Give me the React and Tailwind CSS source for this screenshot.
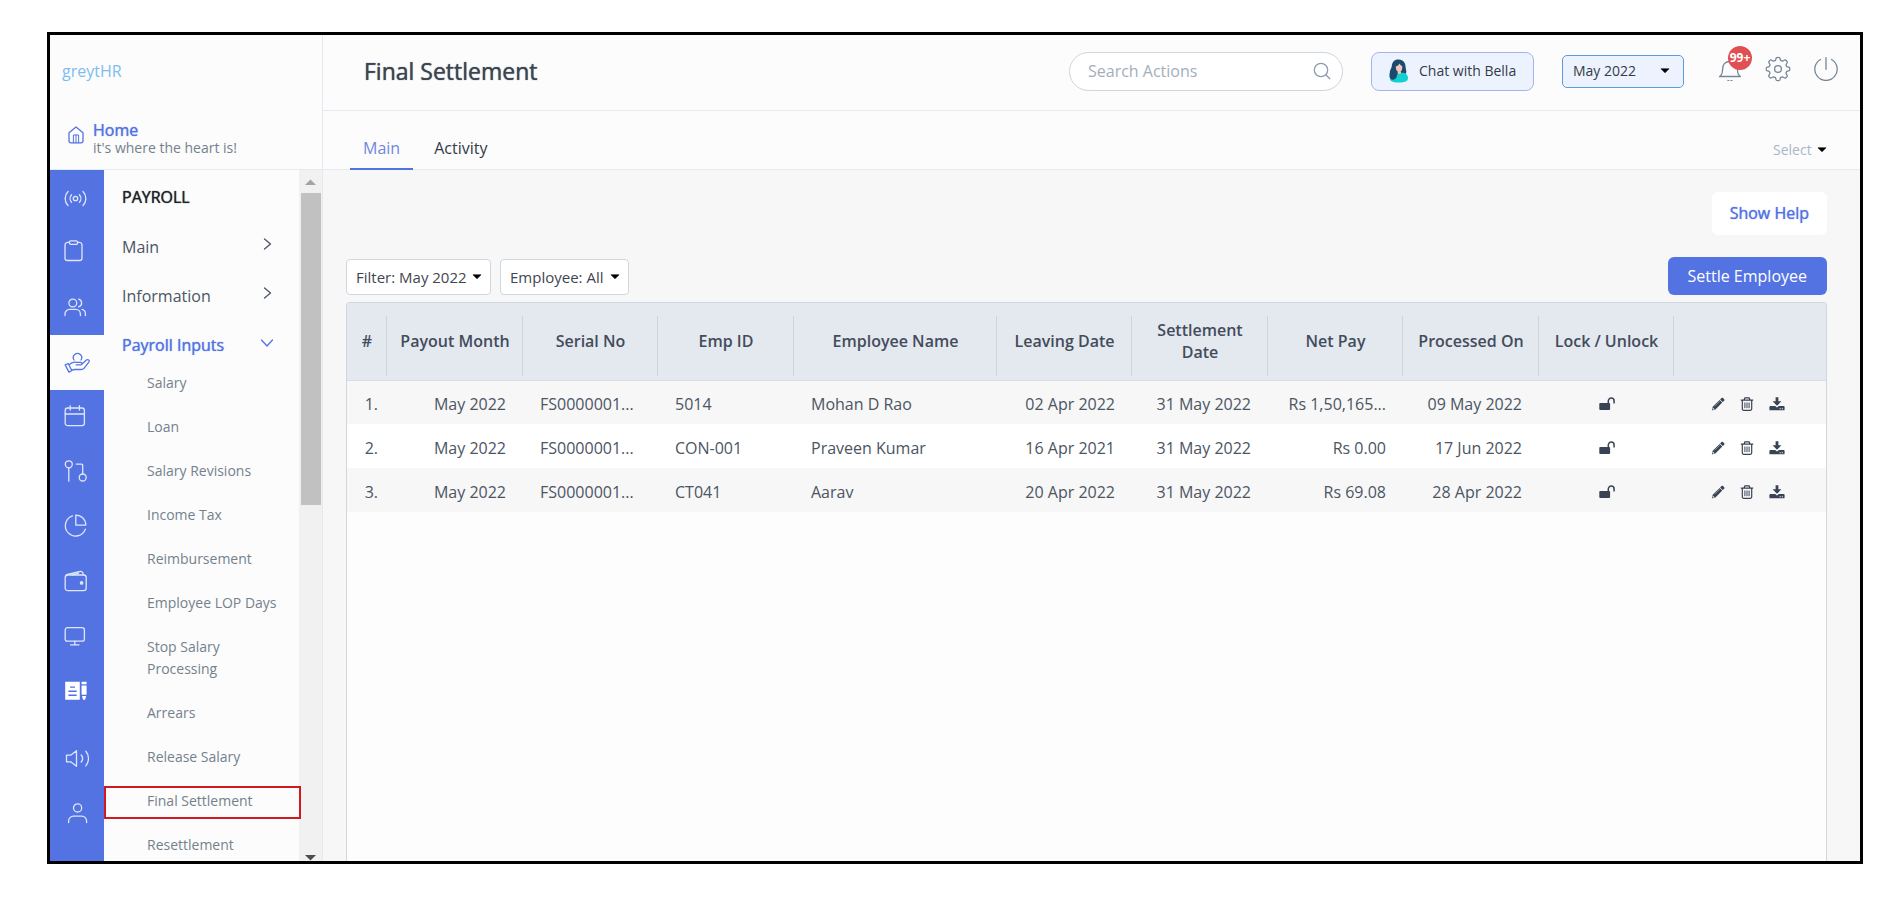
import React from "react";

const line = {
  fill: "none",
  stroke: "currentColor",
  strokeWidth: 1.3,
  strokeLinecap: "round",
  strokeLinejoin: "round",
};

const heavy = "[text-shadow:0_0_1px_currentColor]";

function RailSvg({ children }) {
  return (
    <svg width="26" height="24" viewBox="0 0 26 24" className="overflow-visible" aria-hidden="true" {...line}>
      {children}
    </svg>
  );
}

const railTop = [
  {
    label: "Engage",
    icon: (
      <>
        <circle cx="11.5" cy="12.500" r="2.2" />
        <path d="M7.6 8.800a5.400 5.400 0 0 0 0 7.400M15.400 8.800a5.400 5.400 0 0 1 0 7.400M4 5.500a10 10 0 0 0 0 14M19 5.500a10 10 0 0 1 0 14" />
      </>
    ),
  },
  {
    label: "Tasks",
    icon: (
      <>
        <path d="M5.500 1.400H3.600A2.600 2.600 0 0 0 1 4V16.900A2.600 2.600 0 0 0 3.600 19.500H15.400A2.600 2.600 0 0 0 18 16.900V4A2.600 2.600 0 0 0 15.400 1.400H13.500" />
        <rect x="5.500" y="-0.100" width="8" height="3.400" rx="1.200" />
      </>
    ),
  },
  {
    label: "Employee",
    icon: (
      <>
        <circle cx="8.800" cy="7" r="3.900" />
        <path d="M1 19.500v-1.500a4.600 4.600 0 0 1 4.600-4.600h6.200a4.600 4.600 0 0 1 4.600 4.600v1.500M14.600 3.200a3.900 3.900 0 0 1 0 7.600M18 13.400a4.400 4.400 0 0 1 3.400 4.300v1.800" />
      </>
    ),
  },
  {
    label: "Payroll",
    active: true,
    icon: (
      <>
        <path d="M10 9a4.200 4.200 0 1 1 7 0" />
        <path d="M1.200 13.900l3-1.400 3.600 7-2.800 1.600zM5 13.900c2.500-3 5.400-3.200 8-2.600h3.600c1.800 0 1.800 2.600 0 2.600h-4.400M18 12.900l4.400-3.800c1.600-1.200 3.600.2 2.600 1.800l-5 6.400c-.8 1-1.600 1.200-2.800 1.200H11c-1.200 0-2.200.2-3.400.8" />
      </>
    ),
  },
  {
    label: "Leave",
    icon: (
      <>
        <rect x="1.200" y="2" width="19.200" height="17.600" rx="2.400" />
        <path d="M1.200 8h19.200M6.200 -0.400v4.400M15.400 -0.400v4.400" />
      </>
    ),
  },
  {
    label: "Workflow",
    icon: (
      <>
        <circle cx="4.800" cy="3.300" r="3.500" />
        <path d="M4.800 6.800v13.400M12.300 3.100h5.200a1.200 1.200 0 0 1 1.200 1.200v8.800" />
        <circle cx="18.700" cy="16.500" r="3.500" />
      </>
    ),
  },
  {
    label: "Reports",
    icon: (
      <>
        <path d="M8.500 -0.100A10.300 10.300 0 1 0 21.400 13.100" />
        <path d="M11.800 -0.900v10h10a10 10 0 0 0-10-10z" />
      </>
    ),
  },
  {
    label: "Expenses",
    icon: (
      <>
        <rect x="1.200" y="4" width="21" height="15.600" rx="2.600" />
        <path d="M1.600 5c.2-1 .8-1.500 1.800-1.700L16 0.500c1.500-.4 2.600.4 2.900 1.700l.3 1.600M8 3.900l6.500-1.600" />
        <circle cx="17.600" cy="11.900" r="1.200" fill="currentColor" />
      </>
    ),
  },
  {
    label: "Helpdesk",
    icon: (
      <>
        <rect x="1.200" y="1.700" width="19.200" height="13.400" rx="2.200" />
        <path d="M10.800 15.100v3.600M6.600 18.800h8.400" />
      </>
    ),
  },
  {
    label: "Documents",
    icon: (
      <g stroke="none" fill="#fff">
        <path
          fillRule="evenodd"
          d="M1.200 0.800h14.600v18H1.200zM6 5.600v1.200h5V5.600zM4.400 9.600v1.300h8.300V9.600zM4.400 13.600v1.300h8.300V13.600z"
        />
        <path d="M17.600 0.800h5v2.400h-5zM17.600 4.400h5v9.400h-5zM18 15h4.200l-1.100 3.800h-2z" />
      </g>
    ),
  },
];

const railBottom = [
  {
    label: "Announcements",
    icon: (
      <path d="M2.500 7.200h4.200L12.500 2.700v15.600l-5.800-4.500H2.500zM17.200 7a5.400 5.400 0 0 1 0 7M21.800 3.300c3.600 4 3.600 10.400 0 14.400" />
    ),
  },
  {
    label: "Profile",
    icon: (
      <>
        <circle cx="13.600" cy="4.900" r="4.100" />
        <path d="M4.600 19.500v-1.500a4.800 4.800 0 0 1 4.800-4.800h8.400a4.800 4.800 0 0 1 4.800 4.800v1.500" />
      </>
    ),
  },
];

const payrollInputs = [
  "Salary",
  "Loan",
  "Salary Revisions",
  "Income Tax",
  "Reimbursement",
  "Employee LOP Days",
  "Stop Salary Processing",
  "Arrears",
  "Release Salary",
  "Final Settlement",
  "Resettlement",
];

const columns = [
  { title: "#", width: "w-[40px]" },
  { title: "Payout Month", width: "w-[136px]" },
  { title: "Serial No", width: "w-[135px]" },
  { title: "Emp ID", width: "w-[136px]" },
  { title: "Employee Name", width: "w-[203px]" },
  { title: "Leaving Date", width: "w-[135px]" },
  { title: "Settlement Date", width: "w-[136px]" },
  { title: "Net Pay", width: "w-[135px]" },
  { title: "Processed On", width: "w-[136px]" },
  { title: "Lock / Unlock", width: "w-[135px]" },
  { title: "", width: "w-[152px]" },
];

const rows = [
  ["1.", "May 2022", "FS0000001...", "5014", "Mohan D Rao", "02 Apr 2022", "31 May 2022", "Rs 1,50,165...", "09 May 2022"],
  ["2.", "May 2022", "FS0000001...", "CON-001", "Praveen Kumar", "16 Apr 2021", "31 May 2022", "Rs 0.00", "17 Jun 2022"],
  ["3.", "May 2022", "FS0000001...", "CT041", "Aarav", "20 Apr 2022", "31 May 2022", "Rs 69.08", "28 Apr 2022"],
];

const cellAlign = [
  "pr-[9px] text-right",
  "px-[17px] text-right",
  "px-[17px] text-left",
  "px-[17px] text-left",
  "px-[17px] text-left",
  "px-[17px] text-right",
  "px-[17px] text-right",
  "px-[17px] text-right",
  "px-[17px] text-right",
];

function Caret({ className }) {
  return (
    <svg width="10" height="6" viewBox="0 0 10 6" className={className} aria-hidden="true">
      <path d="M1 0.800h8L5 4.800z" fill="#000" stroke="#000" strokeWidth="0.600" strokeLinejoin="round" />
    </svg>
  );
}

function UnlockIcon() {
  return (
    <svg width="16" height="14" viewBox="0 0 16 14" aria-hidden="true">
      <rect x="0.300" y="6" width="10.800" height="7" rx="0.900" fill="currentColor" />
      <path d="M9.300 6V4a2.900 2.900 0 0 1 5.800 0v2.600" fill="none" stroke="currentColor" strokeWidth="1.500" />
    </svg>
  );
}

function PencilIcon() {
  return (
    <svg width="14" height="14" viewBox="0 0 14 14" aria-hidden="true">
      <path
        d="M10.300 1.200c.6-.6 1.300-.6 1.900 0l.8.800c.6.6.6 1.300 0 1.900l-1.200 1.200-2.700-2.700zM8.600 2.900l2.700 2.700-6.900 6.900-3.600.9.900-3.600z"
        fill="currentColor"
      />
      <path d="M1.900 10.600l1.700 1.700-1.600.4-.5-.5z" fill="#e9ebef" />
      <path d="M3.600 9.300l5.200-5.200" stroke="#aab1bd" strokeWidth="0.700" />
    </svg>
  );
}

function TrashIcon() {
  return (
    <svg width="14" height="14" viewBox="0 0 14 14" aria-hidden="true" fill="none" stroke="currentColor" strokeWidth="1.200">
      <path d="M0.800 3.200h12.400M4 3l.9-2.200h4.200L10 3M2.300 3.400v8.400a1.500 1.500 0 0 0 1.500 1.500h6.400a1.500 1.500 0 0 0 1.500-1.500V3.400" />
      <path d="M4.900 5.500v5.600M7 5.500v5.600M9.100 5.500v5.600" strokeWidth="1" />
    </svg>
  );
}

function DownloadIcon() {
  return (
    <svg width="16" height="14" viewBox="0 0 16 14" aria-hidden="true">
      <path d="M6.600 0.300h2.800v3.900h3L8 8.700 3.600 4.200h3z" fill="currentColor" />
      <path
        fillRule="evenodd"
        d="M1.300 9h4.900L8 10.600 9.800 9h4.900c.5 0 .9.400.9.900v2.500c0 .5-.4.900-.9.900H1.300c-.5 0-.9-.4-.9-.9V9.900c0-.5.400-.9.900-.9zM10.600 11.300v.9h1.100v-.9zM12.800 11.300v.9h1.100v-.9z"
        fill="currentColor"
      />
    </svg>
  );
}

function Dropdown({ label, value, selectClass, caretClass }) {
  return (
    <div className="relative flex items-center">
      <select
        aria-label={label}
        defaultValue={value}
        className={"cursor-pointer appearance-none outline-none " + selectClass}
      >
        <option>{value}</option>
      </select>
      <Caret className={"pointer-events-none absolute " + caretClass} />
    </div>
  );
}

function RailItem({ item }) {
  return (
    <a
      href="#"
      aria-label={item.label}
      className={
        "flex h-[55px] shrink-0 items-center pl-[14px] " +
        (item.active ? "bg-[#fcfcfc] text-[#5473e3]" : "text-[#dfe6fb]")
      }
    >
      <RailSvg>{item.icon}</RailSvg>
    </a>
  );
}

function GroupButton({ title, open }) {
  return (
    <button
      type="button"
      aria-expanded={!!open}
      className={
        "flex h-[49px] w-full items-center justify-between pr-[25px] pl-[18px] text-left " +
        (open ? "text-[#5473e3] " + heavy : "text-[#4b5563]")
      }
    >
      {title}
      <svg width="14" height="14" viewBox="0 0 14 14" className="mb-1" aria-hidden="true" {...line}>
        {open ? <path d="M1.500 4L7 10l5.500-6" /> : <path d="M4.500 1l6 5-6 5" />}
      </svg>
    </button>
  );
}

function Sidebar() {
  return (
    <aside className="flex w-[273px] shrink-0 flex-col border-r border-[#e6e9f0] bg-[#fcfcfc]">
      <a href="#" className="flex h-[73px] shrink-0 items-center pb-[2px] pl-3 text-base text-[#7bbcf2]">
        greytHR
      </a>
      <a href="#" className="flex h-[62px] shrink-0 items-center gap-[9px] border-b border-[#e6e9f0] pl-[18px]">
        <svg width="16" height="18" viewBox="0 0 16 18" className="mb-2 text-[#5473e3]" aria-hidden="true" {...line}>
          <path d="M1 6.800L8 1l7 5.800v8.400a1.600 1.600 0 0 1-1.600 1.600H2.600A1.600 1.600 0 0 1 1 15.200z" />
          <path d="M5.400 16.800V9h5.200v7.800M8 9v7.800" strokeWidth="1" />
        </svg>
        <span className="flex flex-col">
          <span className={"text-base leading-[18px] text-[#5473e3] " + heavy}>Home</span>
          <span className="text-sm leading-[18px] text-[#74818c]">it's where the heart is!</span>
        </span>
      </a>
      <div className="flex min-h-0 flex-1">
        <nav aria-label="Modules" className="flex w-[54px] shrink-0 flex-col bg-[#5473e3]">
          {railTop.map((item) => (
            <RailItem key={item.label} item={item} />
          ))}
          <div className="mt-3 flex flex-col">
            {railBottom.map((item) => (
              <RailItem key={item.label} item={item} />
            ))}
          </div>
        </nav>
        <nav aria-label="Payroll" className="min-w-0 flex-1 pt-[2px]">
          <h2 className={"flex h-[50px] items-center pl-[18px] text-base text-[#1f2328] " + heavy}>PAYROLL</h2>
          <GroupButton title="Main" />
          <GroupButton title="Information" />
          <GroupButton title="Payroll Inputs" open />
          <ul className="-mt-2 text-sm leading-[22px] text-[#74818c]">
            {payrollInputs.map((name) => (
              <li key={name} className="relative">
                <a href="#" className="block py-[11px] pr-4 pl-[43px]">
                  {name}
                </a>
                {name === "Final Settlement" && (
                  <span className="pointer-events-none absolute top-[7px] -right-[2px] bottom-1 left-0 z-10 border-2 border-[#cf1a20]" />
                )}
              </li>
            ))}
          </ul>
        </nav>
        <div className="flex w-[23px] shrink-0 flex-col items-center justify-between bg-[#f1f1f1]">
          <div className="flex w-full flex-col items-center">
            <svg width="11" height="23" viewBox="0 0 11 23" aria-hidden="true">
              <path d="M0 15h11L5.500 9.500z" fill="#a3a3a3" />
            </svg>
            <div className="h-[312px] w-5 bg-[#c1c1c1]" />
          </div>
          <svg width="11" height="6" viewBox="0 0 11 6" aria-hidden="true">
            <path d="M0 0h11L5.500 5.500z" fill="#4d4d4d" />
          </svg>
        </div>
      </div>
    </aside>
  );
}

function Header() {
  return (
    <header className="flex h-[76px] shrink-0 items-center border-b border-[#e6e9f0] bg-[#fcfcfc] pr-[22px] pb-[3px] pl-[41px]">
      <h1 className={"flex-1 text-[23px] text-[#3d4552] " + heavy}>Final Settlement</h1>
      <div className="relative mr-7">
        <input
          type="text"
          aria-label="Search Actions"
          placeholder="Search Actions"
          className="h-[39px] w-[274px] rounded-full border border-[#cfd5dc] bg-white pr-12 pl-[18px] text-base text-[#3d4552] outline-none placeholder:text-[#a3aebd]"
        />
        <svg
          width="18"
          height="18"
          viewBox="0 0 18 18"
          className="pointer-events-none absolute top-[10px] right-3 text-[#8d9aac]"
          aria-hidden="true"
          {...line}
        >
          <circle cx="8" cy="8" r="6.700" />
          <path d="M12.800 12.800l4 4" />
        </svg>
      </div>
      <button
        type="button"
        className="mr-7 flex h-[39px] w-[163px] items-center gap-[10px] rounded-lg border border-[#a4b4ee] bg-[#edf3fe] pl-[17px] text-sm text-[#333b47]"
      >
        <svg width="20" height="24" viewBox="0 0 20 24" aria-hidden="true">
          <path
            d="M9.500 0.500C5.500 0.300 3.200 3 2.800 7 2.600 9.500 0.600 11 0.800 14c0 2.500-.6 4 .8 6 1.500 2 5 2 7 1l8-6c1.300-1.500.6-3.500.2-5.500C16.400 7 16.500 5.500 15.500 3.800 14.500 1.800 12.500 0.600 9.500 0.500z"
            fill="#1c4a6e"
          />
          <path d="M1 20.500C1.500 17.500 5 17 7.500 15.500l5.500-1.800c3.500-.2 6 2 6 5.500 0 3-4 4.300-8.500 4.300S1.500 23 1 20.500z" fill="#12cfd0" />
          <path d="M0.800 14c0 2.500-.6 4 .8 6 2 1.500 5 .5 6-2l.8-4-1.600-4z" fill="#1c4a6e" />
          <path d="M6.800 7.500c1.500-.3 3-1.500 3.600-3 1 1.500 2 2.300 2.800 2.700.3 3-.6 5.600-3 5.800-2.200 0-3.400-2.500-3.400-5.500z" fill="#f3c6bb" />
          <path d="M8.600 12.400l.1 2.200c1.200.8 2.600.6 3.400-.3l-.2-2z" fill="#f3c6bb" />
        </svg>
        Chat with Bella
      </button>
      <Dropdown
        label="Payroll month"
        value="May 2022"
        selectClass="h-[33px] w-[122px] rounded-[5px] border border-[#5e9bdc] bg-[#edf3fe] pl-[10px] text-sm text-[#333b47]"
        caretClass="right-[14px]"
      />
      <div className="ml-[34px] flex items-center gap-[23px] pb-1 text-[#76869a]">
        <a href="#" aria-label="Notifications" className="relative block">
          <svg width="24" height="24" viewBox="0 0 24 24" aria-hidden="true" {...line}>
            <path d="M1.500 19.500c2.500-1.500 3-3.500 3-6.500C4.500 7.500 7 4.500 12 4.500s7.500 3 7.500 8.500c0 3 .5 5 3 6.500zM10 23.500c1 1 3 1 4 0" />
          </svg>
          <span className="absolute -top-[11px] left-[10px] flex h-6 w-6 items-center justify-center rounded-full bg-[#e04f51] text-xs font-bold text-white">
            99+
          </span>
        </a>
        <a href="#" aria-label="Settings" className="block">
          <svg width="26" height="26" viewBox="0 0 26 26" aria-hidden="true" {...line}>
            <circle cx="13" cy="13" r="3.400" />
            <path d="M11.200 2c.4-.8 3.200-.8 3.600 0l.7 2.400 2 .8 2.200-1.200c.9-.4 2.900 1.600 2.500 2.500L21 8.700l.8 2 2.400.7c.8.4.8 2.800 0 3.200l-2.400.7-.8 2 1.200 2.200c.4.9-1.600 2.900-2.500 2.500L17.500 20.800l-2 .8-.7 2.400c-.4.8-3.200.8-3.600 0l-.7-2.400-2-.8-2.200 1.200c-.9.4-2.900-1.600-2.500-2.500L5 17.300l-.8-2-2.400-.7c-.8-.4-.8-2.800 0-3.200l2.400-.7.8-2-1.200-2.200c-.4-.9 1.600-2.900 2.500-2.500l2.200 1.200 2-.8z" />
          </svg>
        </a>
        <a href="#" aria-label="Log out" className="block">
          <svg width="24" height="24" viewBox="0 0 24 24" aria-hidden="true" {...line}>
            <path d="M12 0.700v11.600M6.500 2.500a11.200 11.200 0 1 0 11 0" />
          </svg>
        </a>
      </div>
    </header>
  );
}

function SettlementTable() {
  return (
    <div className="min-h-0 flex-1 overflow-hidden rounded-t border border-b-0 border-[#cfd7e1] bg-[#fdfdfd]">
      <table className="w-full table-fixed border-collapse text-base">
        <thead className="bg-[#e4e8ef] text-[#434c5b]">
          <tr className="h-[77px] border-b border-[#d7dde5]">
            {columns.map((c, i) => (
              <th
                key={i}
                scope="col"
                aria-label={c.title || "Actions"}
                className={
                  "relative px-2 text-center leading-[22px] font-semibold " +
                  c.width +
                  (i < columns.length - 1
                    ? " after:absolute after:top-[13px] after:right-0 after:bottom-1 after:w-px after:bg-[#cdd4de]"
                    : "")
                }
              >
                {c.title}
              </th>
            ))}
          </tr>
        </thead>
        <tbody className="text-[#4b5563]">
          {rows.map((r) => (
            <tr key={r[0]} className="h-[44px] bg-white odd:bg-[#f7f7f7]">
              {r.map((v, i) => (
                <td key={i} className={"pt-1 whitespace-nowrap " + cellAlign[i]}>
                  {v}
                </td>
              ))}
              <td className="pt-1 text-[#3a4354]">
                <button type="button" aria-label="Unlock" className="mx-auto block">
                  <UnlockIcon />
                </button>
              </td>
              <td className="pt-1 text-[#3a4354]">
                <div className="flex items-center gap-[15px] pl-[37px]">
                  <button type="button" aria-label="Edit">
                    <PencilIcon />
                  </button>
                  <button type="button" aria-label="Delete">
                    <TrashIcon />
                  </button>
                  <button type="button" aria-label="Download">
                    <DownloadIcon />
                  </button>
                </div>
              </td>
            </tr>
          ))}
        </tbody>
      </table>
    </div>
  );
}

export default function App() {
  return (
    <div className="flex h-screen bg-white pt-8 pr-[34px] pb-[45px] pl-[47px] font-['Open_Sans',sans-serif]">
      <div className="flex min-w-0 flex-1 overflow-hidden border-[3px] border-black bg-[#f7f7f7]">
        <Sidebar />
        <div className="flex min-w-0 flex-1 flex-col">
          <Header />
          <div className="flex h-[59px] shrink-0 items-stretch justify-between border-b border-[#e6e9f0] bg-[#fcfcfc] pr-[33px] pl-[27px]">
            <nav aria-label="Sections" className="flex text-base">
              <a href="#" aria-current="page" className="-mb-px flex items-center border-b-2 border-[#5473e3] px-[13px] pt-4 text-[#6f87dc]">
                Main
              </a>
              <a href="#" className="-mb-px flex items-center border-b-2 border-transparent px-[21px] pt-4 text-[#333b47]">
                Activity
              </a>
            </nav>
            <div className="flex items-center pt-5">
              <Dropdown label="Action" value="Select" selectClass="w-[54px] bg-transparent text-sm text-[#a9b7c9]" caretClass="right-0" />
            </div>
          </div>
          <main className="flex min-h-0 flex-1 flex-col pt-[22px] pr-[33px] pl-[23px]">
            <div className="flex justify-end">
              <button type="button" className={"h-[43px] rounded-md bg-white px-[18px] pb-[2px] text-base text-[#5473e3] " + heavy}>
                Show Help
              </button>
            </div>
            <div className="mt-[22px] mb-[7px] flex items-end justify-between">
              <div className="flex gap-[9px]">
                <Dropdown
                  label="Filter"
                  value="Filter: May 2022"
                  selectClass="h-9 w-[145px] rounded border border-[#cfd7e1] bg-white pl-[9px] text-[15px] text-[#3f4651]"
                  caretClass="right-[9px]"
                />
                <Dropdown
                  label="Employee"
                  value="Employee: All"
                  selectClass="h-9 w-[129px] rounded border border-[#cfd7e1] bg-white pl-[9px] text-[15px] text-[#3f4651]"
                  caretClass="right-[9px]"
                />
              </div>
              <button type="button" className="h-[38px] rounded-md bg-[#5473e3] px-5 text-base text-white">
                Settle Employee
              </button>
            </div>
            <SettlementTable />
          </main>
        </div>
      </div>
    </div>
  );
}
